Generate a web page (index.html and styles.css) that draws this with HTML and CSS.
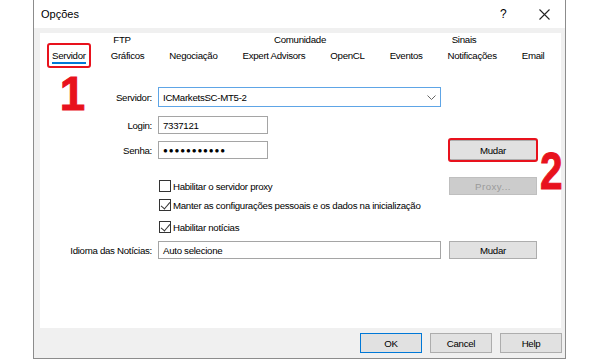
FILE: index.html
```html
<!DOCTYPE html>
<html lang="pt">
<head>
    <meta charset="UTF-8">
    <meta name="viewport" content="width=device-width, initial-scale=1.0">
    <title>Opções</title>
    <link rel="stylesheet" href="styles.css">
</head>
<body>
    <div class="dialog">
        <div class="titlebar">
            <span class="title">Opções</span>
            <span class="help">?</span>
            <span class="close">
                <svg width="11" height="11" viewBox="0 0 11 11">
                    <path d="M0.5 0.5 L10.5 10.5 M10.5 0.5 L0.5 10.5" stroke="#222" stroke-width="1.1" fill="none"/>
                </svg>
            </span>
        </div>

        <div class="content">
            <div class="panel">
                <div class="tabs">
                    <div class="tab-row upper">
                        <div class="tab ftp">FTP</div>
                        <div class="tab comunidade">Comunidade</div>
                        <div class="tab sinais">Sinais</div>
                    </div>
                    <div class="tab-row lower">
                        <div class="tab active">Servidor<span class="mark mark-tab"></span><span class="step step-1">1</span></div>
                        <div class="tab">Gráficos</div>
                        <div class="tab">Negociação</div>
                        <div class="tab">Expert Advisors</div>
                        <div class="tab">OpenCL</div>
                        <div class="tab">Eventos</div>
                        <div class="tab">Notificações</div>
                        <div class="tab">Email</div>
                    </div>
                </div>

                <div class="form">
                    <div class="row row-server">
                        <label class="label">Servidor:</label>
                        <div class="field">
                            <div class="combo">
                                <span>ICMarketsSC-MT5-2</span>
                                <svg width="9" height="5" viewBox="0 0 9 5">
                                    <path d="M0.5 0.5 L4.5 4.5 L8.5 0.5" stroke="#666" stroke-width="1" fill="none"/>
                                </svg>
                            </div>
                        </div>
                    </div>

                    <div class="row row-login">
                        <label class="label">Login:</label>
                        <div class="field">
                            <div class="input short">7337121</div>
                        </div>
                    </div>

                    <div class="row row-pass">
                        <label class="label">Senha:</label>
                        <div class="field">
                            <div class="input short dots">●●●●●●●●●●●</div>
                        </div>
                        <div class="side">
                            <div class="btn tall">Mudar<span class="mark mark-btn"></span><span class="step step-2">2</span></div>
                        </div>
                    </div>

                    <div class="row row-proxy">
                        <span class="label"></span>
                        <div class="field">
                            <span class="check"></span>Habilitar o servidor proxy
                        </div>
                        <div class="side">
                            <div class="btn disabled">Proxy...</div>
                        </div>
                    </div>

                    <div class="row row-keep">
                        <span class="label"></span>
                        <div class="field wide">
                            <span class="check checked"></span>Manter as configurações pessoais e os dados na inicialização
                        </div>
                    </div>

                    <div class="row row-news">
                        <span class="label"></span>
                        <div class="field">
                            <span class="check checked"></span>Habilitar notícias
                        </div>
                    </div>

                    <div class="row row-lang">
                        <label class="label">Idioma das Notícias:</label>
                        <div class="field">
                            <div class="input">Auto selecione</div>
                        </div>
                        <div class="side">
                            <div class="btn">Mudar</div>
                        </div>
                    </div>
                </div>
            </div>
        </div>

        <div class="footer">
            <div class="btn default">OK</div>
            <div class="btn">Cancel</div>
            <div class="btn">Help</div>
        </div>
    </div>
</body>
</html>
```

FILE: styles.css
```css
:root {
    --border: #8c8c8c;
    --face: #f0f0f0;
    --btn: #e1e1e1;
    --btn-border: #adadad;
    --field-border: #a5a5a5;
    --blue: #0078d7;
    --red: #e8121d;
}

* {
    margin: 0;
    padding: 0;
    box-sizing: border-box;
}

body {
    background: #fff;
    font-family: "Liberation Sans", Arial, sans-serif;
    font-size: 9.7px;
    letter-spacing: -0.3px;
    color: #000;
}

.dialog {
    width: 533px;
    height: 359px;
    margin-left: 33px;
    border: 1px solid var(--border);
    border-top: none;
    background: var(--face);
    display: flex;
    flex-direction: column;
}

.titlebar {
    height: 28px;
    background: #fff;
    display: flex;
    align-items: center;
    padding-left: 7px;
    font-size: 11px;
    letter-spacing: 0;
}

.title {
    flex: 1;
}

.help {
    width: 12px;
    margin-right: 27px;
    font-size: 12px;
}

.close {
    display: flex;
    margin-right: 15px;
}

.content {
    padding: 5px 4px 0 6px;
}

.panel {
    height: 295px;
    background: #fff;
}

/* tabs */
.tab-row {
    display: flex;
    height: 14px;
    line-height: 14px;
}

.lower {
    margin-top: 2px;
}

.tab {
    padding: 0 12.5px;
    white-space: nowrap;
    position: relative;
}

.upper .tab {
    padding: 0;
    text-align: center;
}

.ftp {
    width: 48px;
    margin-left: 58px;
}

.comunidade {
    width: 100px;
    margin-left: 104px;
}

.sinais {
    width: 60px;
    margin-left: 84px;
}

.tab.active {
    padding-left: 12px;
}

.tab.active::after {
    content: "";
    position: absolute;
    left: 12px;
    right: 12px;
    bottom: -1px;
    height: 2px;
    background: var(--blue);
}

/* red annotations */
.mark {
    position: absolute;
    border: 2.5px solid var(--red);
    border-radius: 3px;
}

.mark-tab {
    left: 7px;
    right: 7px;
    top: -6px;
    bottom: -5px;
}

.mark-btn {
    inset: -3px -2px -3px -2px;
}

.step {
    position: absolute;
    color: var(--red);
    font-family: "Liberation Sans", Arial, sans-serif;
    font-weight: bold;
    letter-spacing: 0;
    line-height: 1;
    -webkit-text-stroke: 1px var(--red);
}

.step-1 {
    font-size: 48px;
    left: 19px;
    top: 21px;
    transform: scaleX(0.95);
}

.step-2 {
    font-size: 52px;
    left: 90px;
    top: 4px;
    transform: scaleX(0.78);
    transform-origin: left top;
}

/* form */
.form {
    margin-top: 24px;
}

.row {
    display: flex;
    align-items: center;
}

.label {
    width: 112px;
    flex-shrink: 0;
    margin-right: 6px;
    text-align: right;
    white-space: nowrap;
}

.field {
    width: 283px;
    flex-shrink: 0;
    display: flex;
    align-items: center;
    white-space: nowrap;
}

.field.wide {
    width: auto;
}

.side {
    width: 88px;
    margin-left: 8px;
}

.row-server { height: 20px; }
.row-login { height: 18px; margin-top: 9px; }
.row-pass { height: 20px; margin-top: 6px; }
.row-proxy { height: 18px; margin-top: 17px; }
.row-keep { height: 14px; margin-top: 3px; }
.row-news { height: 14px; margin-top: 8px; }
.row-lang { height: 18px; margin-top: 7px; }

.combo {
    width: 100%;
    height: 20px;
    border: 1px solid #5ea5e6;
    display: flex;
    align-items: center;
    justify-content: space-between;
    padding: 0 4px 0 4px;
}

.input {
    width: 100%;
    height: 18px;
    border: 1px solid var(--field-border);
    display: flex;
    align-items: center;
    padding-left: 4px;
}

.input.short {
    width: 110px;
}

.dots {
    font-size: 8px;
    letter-spacing: 0.9px;
}

.check {
    width: 12px;
    height: 12px;
    flex-shrink: 0;
    margin: 0 2px 0 1px;
    border: 1px solid #333;
    position: relative;
}

.check.checked::after {
    content: "";
    position: absolute;
    left: 3px;
    top: 0;
    width: 4px;
    height: 8px;
    border: solid #333;
    border-width: 0 1px 1px 0;
    transform: rotate(40deg);
}

/* buttons */
.btn {
    height: 18px;
    background: var(--btn);
    border: 1px solid var(--btn-border);
    display: flex;
    align-items: center;
    justify-content: center;
    position: relative;
}

.btn.tall {
    height: 20px;
}

.btn.disabled {
    background: #cccccc;
    border-color: #bfbfbf;
    color: #9a9a9a;
    letter-spacing: 0.5px;
}

.footer {
    flex: 1;
    display: flex;
    justify-content: flex-end;
    align-items: center;
    gap: 8px;
    padding-right: 3px;
}

.footer .btn {
    width: 62px;
    height: 20px;
}

.footer .btn.default {
    border-color: var(--blue);
}
```
